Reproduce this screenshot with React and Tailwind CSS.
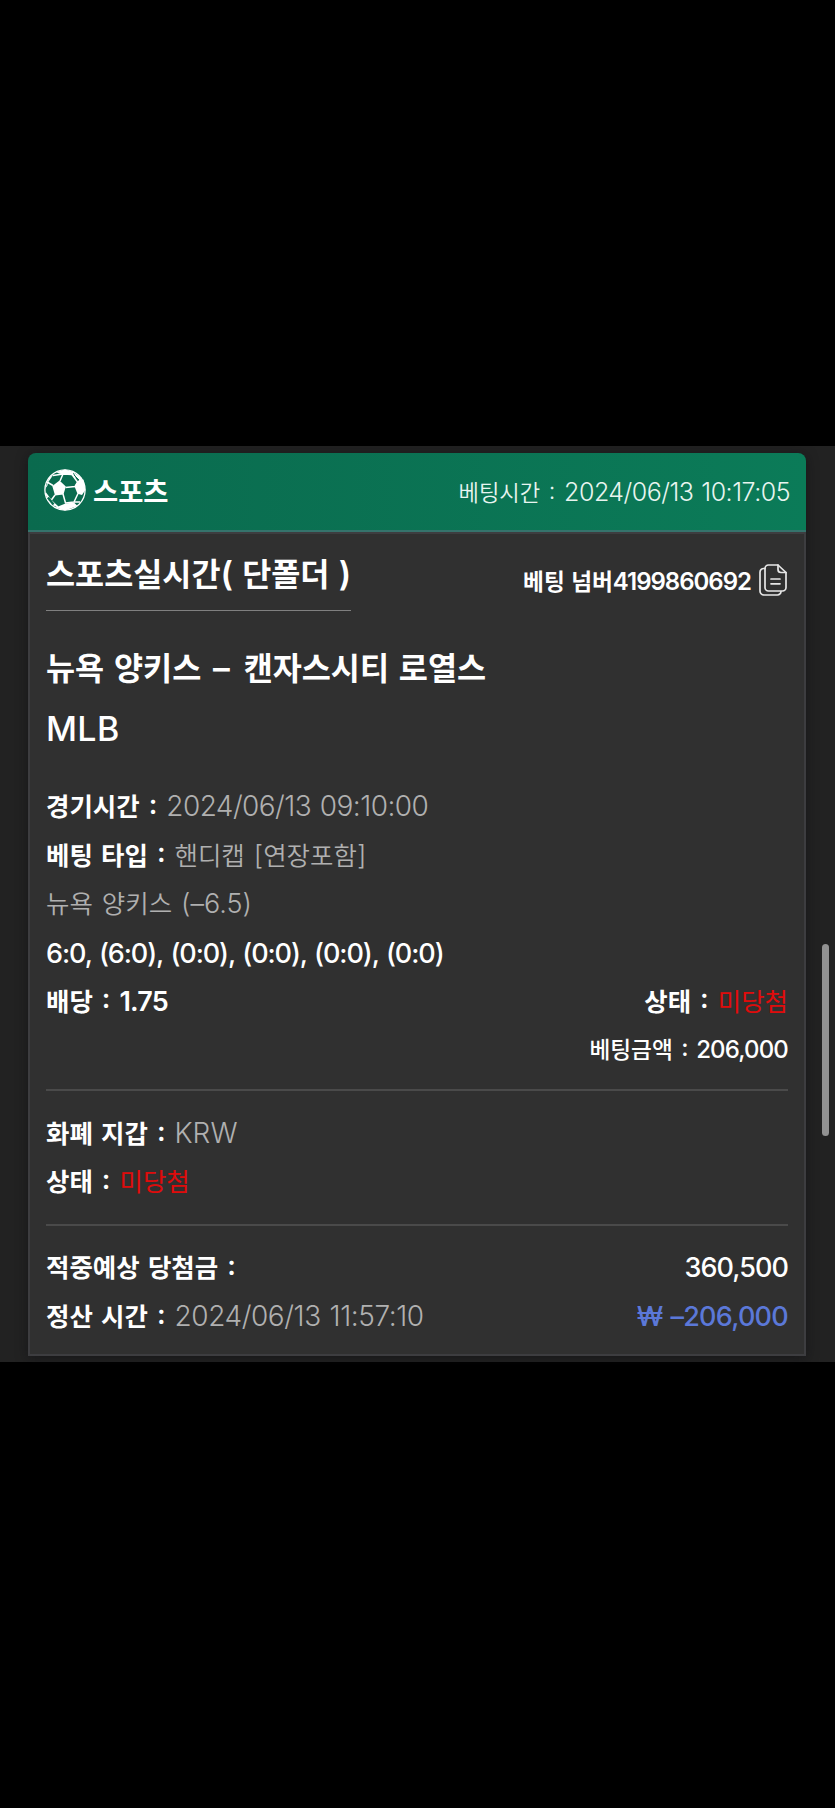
import React from 'react';
import clsx from 'clsx';

const partClass = (part) => {
  // separating colon sits in the middle of the line
  if (part === ' :') return 'relative -top-[0.09em] tracking-[0.03em]';
  if (part === ' – ') return 'tracking-[0.06em]';
  // hangul is slightly smaller than the latin glyphs next to it
  return 'text-[0.944em] tracking-normal';
};

const Text = ({ children, className }) => (
  <span className={clsx('whitespace-pre', className)}>
    {children.split(/([\uac00-\ud7a3]+| :| – )/).map((part, i) =>
      i % 2 ? (
        <span key={i} className={partClass(part)}>
          {part}
        </span>
      ) : (
        part
      )
    )}
  </span>
);

const Row = ({ label, value, valueClass = 'font-[350] text-[#b0b0b0]', children }) => (
  <div className="flex h-[48.75px] items-center justify-between leading-none">
    <div>
      {label && <Text className="font-semibold">{label}</Text>}
      {value && <Text className={valueClass}>{value}</Text>}
    </div>
    {children}
  </div>
);

const BallIcon = () => (
  <svg className="h-[42px] w-[42px]" viewBox="0 0 42 42" fill="none" stroke="#fff" strokeLinejoin="round">
    <circle cx="21" cy="21" r="20.1" strokeWidth="1.3" />
    <g strokeWidth="1.5">
      <path d="M16 12 19 5 28 5.500 33.500 13 31 17.500 21.500 18.500" />
      <path d="M19 25 21.500 34 30 33 34 24.500" />
      <path d="M9 16.500 3 13M19 5 9 6.500M11 26 7 31.500 14 38M7 31.500 1.500 24M28 5.500 36 10M30 33 36 33" />
    </g>
    <g fill="#fff" stroke="none">
      <path d="M15.500 11.500 21.800 17.500 19.500 25.500 11 26.500 8.300 17Z" />
      <path d="M30.500 17.500 34 12 39.500 10.500 41.300 21 38 26 33.500 24.800Z" />
      <path d="M12 3 21 .5 30 3 28.500 6 19 5.600 15 4.500Z" />
      <path d="M11.500 38.500 14 37.500 21.500 34.500 30 33.500 33.500 37 21 41.500Z" />
      <path d="M5 9 9.500 5.500 4 13.500 3.500 16.500 1 20Z" />
      <path d="M1 24 7.500 31.500 14 38.500 6 35Z" />
      <path d="M29 3 37 8.500 40 15 35 12Z" />
    </g>
    <path d="M30 6 35 11" stroke="#0a6f51" strokeWidth="1" />
    <path d="M4 28.500 9.500 35.500" stroke="#0a6f51" strokeWidth="2.4" />
  </svg>
);

const CopyIcon = () => (
  <svg
    className="relative -top-[2px] mr-[1px] h-[32px] w-[28px]"
    viewBox="0 0 28 32"
    fill="none"
    stroke="#e6e6e6"
    strokeWidth="1.7"
    strokeLinecap="round"
    strokeLinejoin="round"
  >
    <path d="M19 1H9.500A3.500 3.500 0 0 0 6 4.500v19A3.500 3.500 0 0 0 9.500 27h14a3.500 3.500 0 0 0 3.500-3.500V8.500Z" />
    <path d="M19 1v4.500a3 3 0 0 0 3 3h5" />
    <path d="M6 4.500H5A3.700 3.700 0 0 0 1 8.200v18.500A4 4 0 0 0 5 31H18.500a3.500 3.500 0 0 0 3.500-3.500" />
    <path d="M12 15h9M12 19.800h9" />
  </svg>
);

const Divider = () => <div className="h-[2px] bg-[#4a4a4a]" />;

const App = () => {
  return (
    <div className="h-[1808px] w-[835px] bg-black pt-[446px] font-['Inter','Noto_Sans_CJK_KR',sans-serif] text-white [font-feature-settings:'calt'_0] [word-spacing:0.085em]">
      <div className="flex h-[916px] bg-[#222222] pt-[7px] pl-[28px]">
        <div className="flex h-[903px] w-[778px] flex-col rounded-t-lg shadow-[0_2px_12px_rgba(12,12,16,0.5)]">
          {/* Card header */}
          <div className="flex h-[79px] shrink-0 items-center justify-between rounded-t-lg border-b-2 border-[#35736c] bg-linear-to-r from-[#0a6a4e] to-[#0b7b58] px-[16px] leading-none">
            <div className="flex items-center gap-[7px] pb-[3px]">
              <BallIcon />
              <Text className="pt-[3px] text-[29px] font-semibold">스포츠</Text>
            </div>
            <div className="pt-[2px] font-[350] text-[#e8f5f0]">
              <Text className="text-[23.5px]">베팅시간 : </Text>
              <Text className="text-[25px] tracking-[-0.02em]">2024/06/13 10:17:05</Text>
            </div>
          </div>

          {/* Card body */}
          <div className="flex-1 border-2 border-[#3d3d40] bg-[#303030] px-[16px] text-[27px]">
            <div className="flex h-[77px] justify-between leading-none">
              <div className="flex h-[77px] items-center border-b border-[#808080] pt-[5px]">
                <Text className="text-[33.5px] font-semibold tracking-[-0.01em]">스포츠실시간( 단폴더 )</Text>
              </div>
              <div className="flex h-[96px] items-center gap-[8px]">
                <Text className="text-[24px] font-semibold tracking-[-0.042em]">베팅 넘버4199860692</Text>
                <CopyIcon />
              </div>
            </div>

            <div className="mt-[27px] flex h-[61px] items-center leading-none">
              <Text className="text-[33.5px] font-semibold">뉴욕 양키스 – 캔자스시티 로열스</Text>
            </div>
            <div className="flex h-[60px] items-center leading-none">
              <Text className="text-[34px] font-medium tracking-[0.01em]">MLB</Text>
            </div>

            <div className="mt-[23px]">
              <Row label="경기시간 : " value="2024/06/13 09:10:00" valueClass="text-[28px] font-[350] tracking-[-0.02em] text-[#b0b0b0]" />
              <Row label="베팅 타입 : " value="핸디캡 [연장포함]" />
              <Row value="뉴욕 양키스 (–6.5)" />
              <Row value="6:0, (6:0), (0:0), (0:0), (0:0), (0:0)" valueClass="relative top-px font-medium tracking-[-0.04em]" />
              <Row label="배당 : " value="1.75" valueClass="font-semibold tracking-[-0.03em]">
                <div>
                  <Text className="font-semibold">상태 : </Text>
                  <Text className="font-normal text-[#e00b0b]">미당첨</Text>
                </div>
              </Row>
              <div className="flex h-[48px] items-center justify-end leading-none">
                <Text className="text-[24px] font-medium tracking-[-0.035em]">베팅금액 : 206,000</Text>
              </div>
            </div>

            <div className="mt-[15px]">
              <Divider />
            </div>
            <div className="py-[18px]">
              <Row label="화폐 지갑 : " value="KRW" valueClass="text-[28px] font-[350] text-[#b0b0b0]" />
              <Row label="상태 : " value="미당첨" valueClass="font-normal text-[#e00b0b]" />
            </div>
            <Divider />
            <div className="pt-[17px]">
              <Row label="적중예상 당첨금 :">
                <Text className="font-medium tracking-[-0.035em]">360,500</Text>
              </Row>
              <Row label="정산 시간 : " value="2024/06/13 11:57:10" valueClass="text-[28px] font-[350] tracking-[-0.015em] text-[#b0b0b0]">
                <Text className="font-medium tracking-[-0.027em] text-[#5b78d8]">₩ –206,000</Text>
              </Row>
            </div>
          </div>
        </div>

        {/* Scrollbar thumb */}
        <div className="mt-[491px] ml-[16px] h-[192px] w-[7px] rounded-full bg-[#929292]" />
      </div>
    </div>
  );
};

export default App;
